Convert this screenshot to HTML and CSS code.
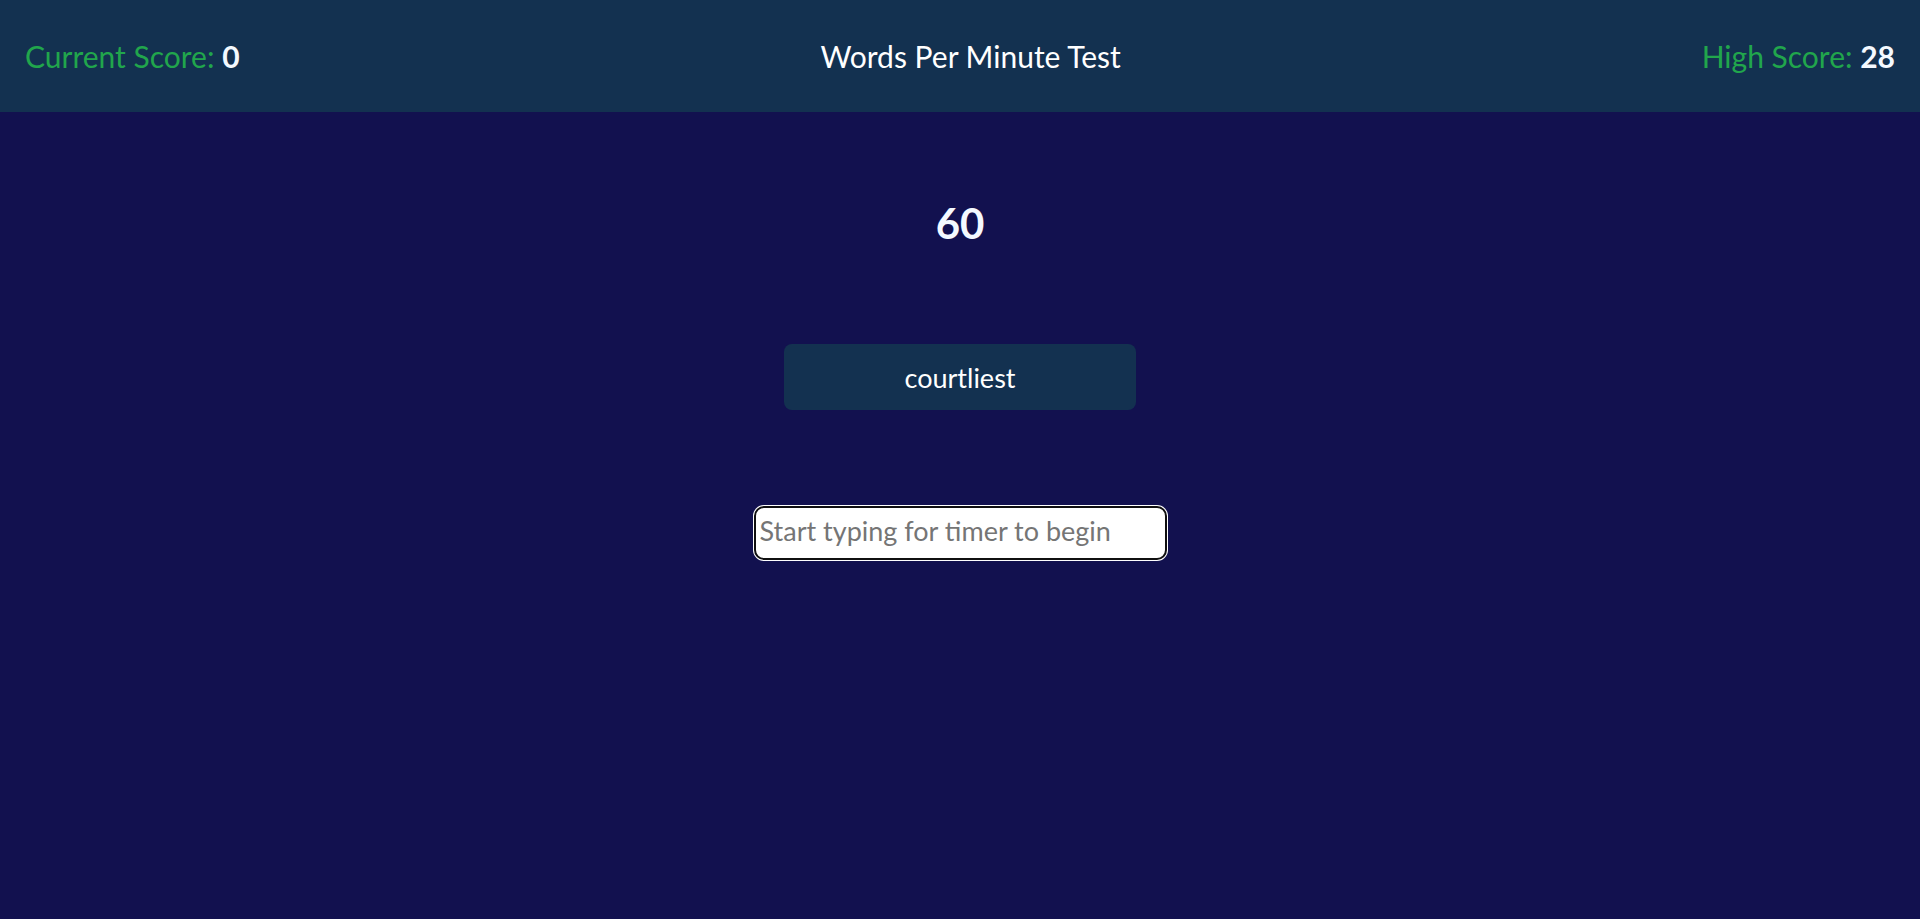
FILE: index.html
```html
<!DOCTYPE html>
<html lang="en">
<head>
<meta charset="utf-8">
<title>Words Per Minute Test</title>
<link rel="stylesheet" href="styles.css">
</head>
<body>
<header class="topbar">
  <div class="score"><span class="score-label">Current Score:</span> <span class="score-value">0</span></div>
  <div class="title">Words Per Minute Test</div>
  <div class="score"><span class="score-label">High Score:</span> <span class="score-value">28</span></div>
</header>
<main class="game">
  <div class="timer">60</div>
  <div class="word-card">courtliest</div>
  <input class="typing" type="text" placeholder="Start typing for timer to begin" autofocus>
</main>
</body>
</html>
```
FILE: styles.css
```css
html, body {
  margin: 0;
  padding: 0;
  height: 100%;
}
body {
  background: #12114f;
  font-family: "Lato", "Open Sans", sans-serif;
  color: #ffffff;
}
.topbar {
  height: 112px;
  background: #133150;
  display: flex;
  justify-content: space-between;
  align-items: center;
  padding: 0 25px;
  box-sizing: border-box;
  font-size: 30px;
}
.score-label {
  color: #21a64c;
}
.score-value {
  font-weight: 700;
  color: #f4f9ff;
}
.title {
  color: #ffffff;
}
.game {
  display: flex;
  flex-direction: column;
  align-items: center;
  padding-top: 86px;
}
.timer {
  font-size: 42px;
  font-weight: 700;
  line-height: 50px;
  color: #f4f9ff;
}
.word-card {
  margin-top: 96px;
  width: 352px;
  height: 66px;
  box-sizing: border-box;
  background: #133150;
  border-radius: 8px;
  display: flex;
  align-items: center;
  justify-content: center;
  font-size: 27px;
}
.typing {
  margin-top: 96px;
  width: 413px;
  height: 54px;
  box-sizing: border-box;
  border: 2px solid #101010;
  border-radius: 10px;
  box-shadow: 0 0 0 1px #ffffff;
  background: #ffffff;
  outline: none;
  padding: 0 4px 6px 4px;
  font-family: "Lato", "Open Sans", sans-serif;
  font-size: 27px;
  color: #000;
}
.typing::placeholder {
  color: #757575;
}
```
